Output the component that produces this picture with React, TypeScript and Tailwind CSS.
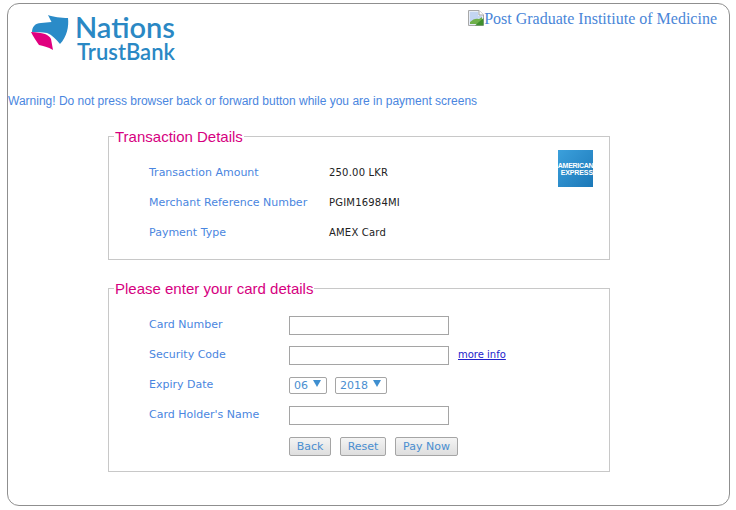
const label = "text-[#4a86e0] font-['DejaVu_Sans',sans-serif] text-[11px] leading-[30px]";
const value = "text-[#222] font-['DejaVu_Sans',sans-serif] text-[10px] tracking-[0.2px] leading-[30px]";
const legend = "-ml-[35px] px-px pt-[2px] text-[#d6007f] font-['Liberation_Sans',sans-serif] text-[15px] leading-[20px]";
const input = "block w-[160px] h-[19px] border border-[#a5a5a5] bg-white";
const select = "flex items-center gap-[5px] h-[17px] border border-[#a5a5a5] rounded-[2px] pl-[4px] text-[#4a8ed0] font-['DejaVu_Sans',sans-serif] text-[11px]";
const button = "h-[19px] border border-[#a5a5a5] rounded-[2px] bg-gradient-to-b from-[#f4f4f4] to-[#dedede] text-[#4a8ed0] font-['DejaVu_Sans',sans-serif] text-[11px] leading-none";

function Caret() {
  return (
    <svg width="8" height="7" viewBox="0 0 8 7" className="mb-[3px]">
      <path d="M0 0H8L4 7Z" fill="#3f8fd0" />
    </svg>
  );
}

function BrokenImage() {
  return (
    <svg width="16" height="16" viewBox="0 0 16 16" className="shrink-0">
      <path d="M0.5 0.5H11L15.5 5V15.5H0.5Z" fill="#e6edf8" stroke="#a8a8a8" />
      <path d="M2 2H10V6H14V8C10 8 6 9 2 12Z" fill="#c3d5f2" />
      <path d="M2 14V12C5 9 8 8 11 9L14 7V14Z" fill="#6fb04a" />
      <path d="M7 15.5L15.5 8V15.5Z" fill="#3f8f2e" />
      <path d="M11 0.5V5H15.5" fill="#fff" stroke="#a8a8a8" />
    </svg>
  );
}

function Logo() {
  return (
    <div className="flex items-start gap-[6px] -mt-[1px]">
      <svg width="38" height="36" viewBox="0 0 38 36" className="mt-[2px]">
        <path d="M17 0C22 2 30 3 37 3C38 11 36 22 29 29C25 24 21 20 16 18C11 17 6 17 1 17C1 12 4 8 10 8L20.5 7Z" fill="#2a8bc8" />
        <path d="M0 17C6 17 10 18 14 19C17 20 19 22 20 24L22 35C17 32 12 31 8 30C5 26 2 21 0 17Z" fill="#e0007f" />
      </svg>
      <div className="flex flex-col items-end font-['Lato',sans-serif] text-[#2a88c4]">
        <span className="text-[29px] leading-[28px] font-semibold">Nations</span>
        <span className="text-[22px] leading-[22px] font-semibold">TrustBank</span>
      </div>
    </div>
  );
}

function Amex() {
  return (
    <div className="w-[35px] h-[37px] bg-gradient-to-br from-[#3ba0dc] to-[#1b78b8] flex flex-col items-center justify-center text-white font-['Liberation_Sans',sans-serif] text-[7px] leading-[7px] font-bold">
      <span className="tracking-[-0.3px]">AMERICAN</span>
      <span className="self-end tracking-[-0.1px]">EXPRESS</span>
    </div>
  );
}

export default function App() {
  return (
    <div className="w-[736px] h-[510px] bg-white pt-[3px] pl-[7px] overflow-hidden">
      <div className="relative w-[723px] h-[503px] border border-[#8f8f8f] rounded-[12px]">
        <div className="flex justify-between items-start pl-[23px] pr-[12px] pt-[10px] h-[86px]">
          <Logo />
          <div className="flex items-start -mt-[4px] text-[#4a86d8] font-['Liberation_Serif',serif] text-[16px] leading-[18px]">
            <BrokenImage />
            <span>Post Graduate Institiute of Medicine</span>
          </div>
        </div>
        <p className="mt-[3px] text-[#4a86e0] font-['Liberation_Sans',sans-serif] text-[12px] leading-[16px]">
          Warning! Do not press browser back or forward button while you are in payment screens
        </p>

        <fieldset className="ml-[100px] mt-[16px] w-[502px] h-[135px] border border-[#c8c8c8] px-[40px] pt-[11px]">
          <legend className={legend}>Transaction Details</legend>
          <div className="flex justify-between">
            <div className="grid grid-cols-[180px_auto]">
              <span className={label}>Transaction Amount</span>
              <span className={value}>250.00 LKR</span>
              <span className={label}>Merchant Reference Number</span>
              <span className={value}>PGIM16984MI</span>
              <span className={label}>Payment Type</span>
              <span className={value}>AMEX Card</span>
            </div>
            <div className="-mr-[24px] -mt-[8px]">
              <Amex />
            </div>
          </div>
        </fieldset>

        <fieldset className="ml-[100px] mt-[17px] w-[502px] h-[195px] border border-[#c8c8c8] px-[40px] pt-[11px]">
          <legend className={legend}>Please enter your card details</legend>
          <div className="grid grid-cols-[140px_auto] auto-rows-[30px] items-center">
            <span className={label}>Card Number</span>
            <input className={input} />
            <span className={label}>Security Code</span>
            <div className="flex items-center gap-[9px]">
              <input className={input} />
              <a href="#" className="mb-[2px] text-[#2222cc] underline font-['DejaVu_Sans',sans-serif] text-[10px]">more info</a>
            </div>
            <span className={label}>Expiry Date</span>
            <div className="flex gap-[8px]">
              <div className={`${select} w-[38px]`}><span className="mt-[2px]">06</span><Caret /></div>
              <div className={`${select} w-[52px]`}><span className="mt-[2px]">2018</span><Caret /></div>
            </div>
            <span className={label}>Card Holder's Name</span>
            <input className={input} />
            <span />
            <div className="flex gap-[9px] mt-[2px]">
              <button className={`${button} w-[42px]`}>Back</button>
              <button className={`${button} w-[46px]`}>Reset</button>
              <button className={`${button} w-[63px]`}>Pay Now</button>
            </div>
          </div>
        </fieldset>
      </div>
    </div>
  );
}
